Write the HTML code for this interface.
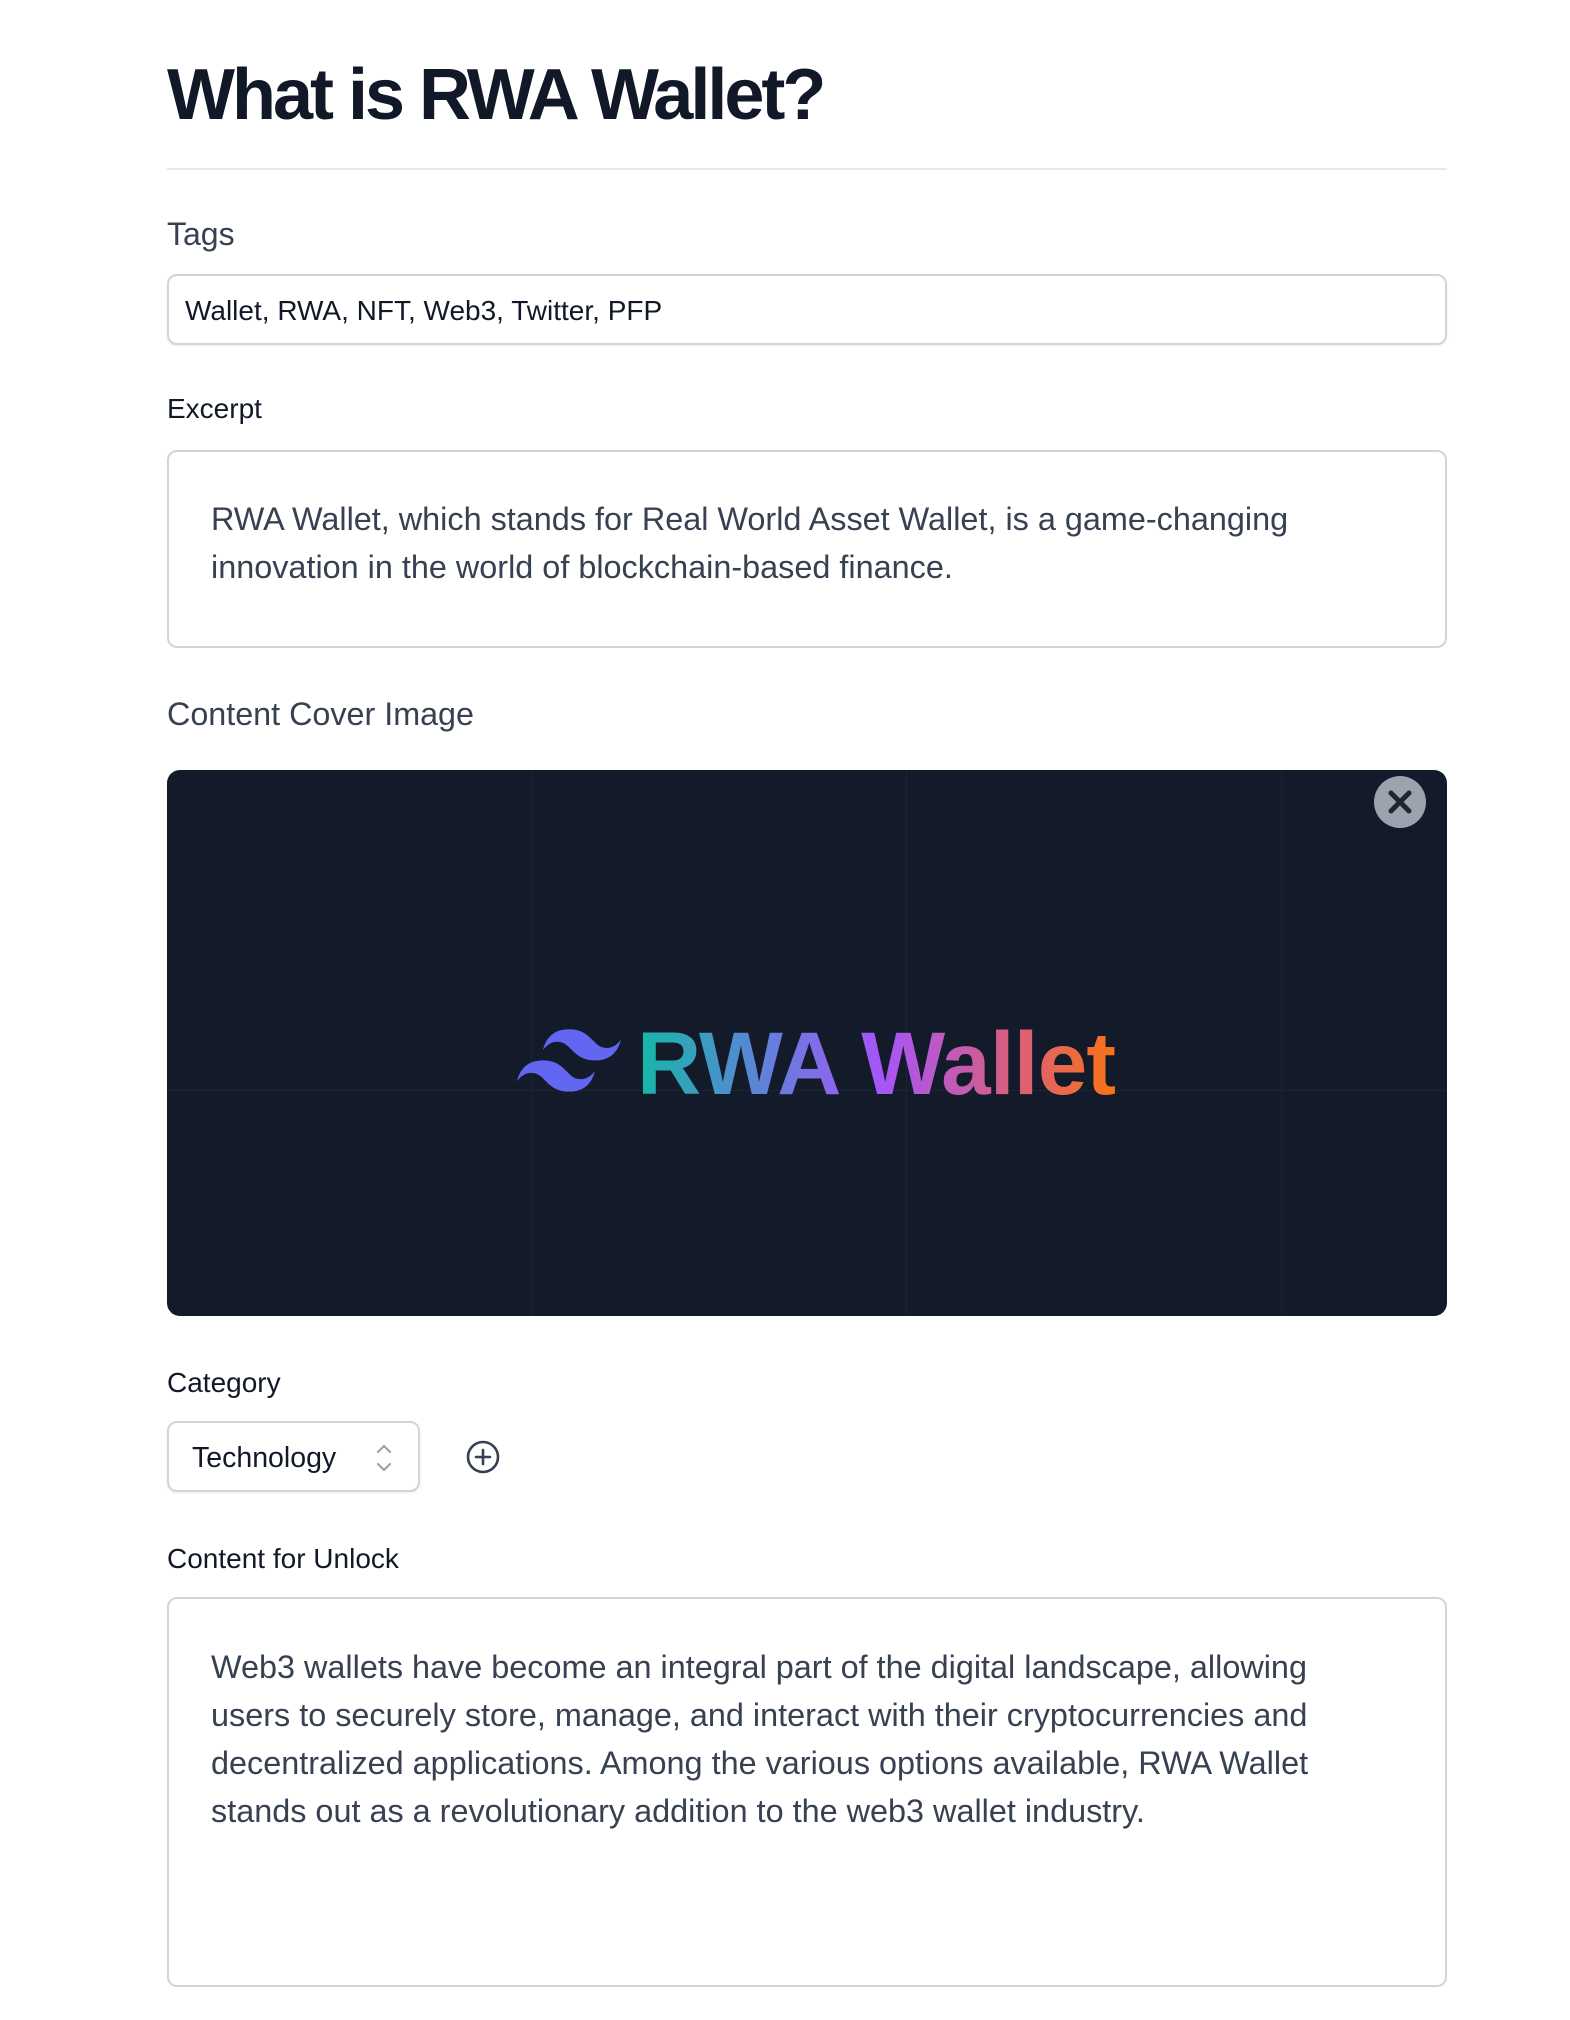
<!DOCTYPE html>
<html><head><meta charset="utf-8"><style>
*{box-sizing:border-box;margin:0;padding:0}
body{width:1570px;height:2020px;background:#fff;font-family:"Liberation Sans",sans-serif;position:relative;overflow:hidden;color:#111827}
.a{position:absolute}
h1{position:absolute;left:167px;top:54px;font-size:72px;font-weight:700;letter-spacing:-3px;color:#111827}
.lbl{position:absolute;left:167px;font-size:28px;color:#111827;line-height:1}
.box{position:absolute;left:167px;width:1280px;border:2px solid #d1d5db;border-radius:10px;background:#fff}
.txt{font-size:32.4px;line-height:48px;color:#374151}
</style></head><body>
<h1>What is RWA Wallet?</h1>
<div class="a" style="left:167px;top:168px;width:1280px;height:2px;background:#e5e7eb"></div>
<div class="lbl" style="top:218px;font-size:32px;color:#374151">Tags</div>
<div class="box" style="top:274px;height:71px;box-shadow:0 1px 2px rgba(0,0,0,.08)"><div style="position:absolute;left:16px;top:19px;font-size:28px;color:#111827">Wallet, RWA, NFT, Web3, Twitter, PFP</div></div>
<div class="lbl" style="top:395px">Excerpt</div>
<div class="box txt" style="top:450px;height:198px;padding:43px 42px 0 42px">RWA Wallet, which stands for Real World Asset Wallet, is a game-changing innovation in the world of blockchain-based finance.</div>
<div class="lbl" style="top:698px;font-size:32.3px;color:#374151">Content Cover Image</div>
<div class="a" style="left:167px;top:770px;width:1280px;height:546px;background:#131a2a;border-radius:13px;overflow:hidden">
 <div class="a" style="left:364px;top:0;width:1px;height:546px;background:#1b2335"></div>
 <div class="a" style="left:739px;top:0;width:1px;height:546px;background:#1b2335"></div>
 <div class="a" style="left:1114px;top:0;width:1px;height:546px;background:#1b2335"></div>
 <div class="a" style="left:0;top:320px;width:1280px;height:1px;background:#1b2335"></div>
 <svg class="a" style="left:350px;top:258px" width="104" height="66" viewBox="0 0 54 33"><path fill="#6366f1" d="M27 0c-7.2 0-11.7 3.6-13.5 10.8 2.7-3.6 5.850-4.95 9.45-4.05 2.054.513 3.522 2.004 5.147 3.653C30.744 13.09 33.808 16.2 40.5 16.2c7.2 0 11.7-3.6 13.5-10.8-2.7 3.6-5.85 4.95-9.45 4.05-2.054-.513-3.522-2.004-5.147-3.653C36.756 3.11 33.692 0 27 0zM13.5 16.2C6.3 16.2 1.8 19.8 0 27c2.7-3.6 5.85-4.95 9.45-4.05 2.054.514 3.522 2.004 5.147 3.653C17.244 29.29 20.308 32.4 27 32.4c7.2 0 11.7-3.6 13.5-10.8-2.7 3.6-5.85 4.95-9.45 4.05-2.054-.513-3.522-2.004-5.147-3.653C23.256 19.31 20.192 16.2 13.5 16.2z"/></svg>
 <div class="a" style="left:470px;top:249px;font-size:89px;font-weight:700;letter-spacing:-0.8px;line-height:1;background:linear-gradient(90deg,#14b8a6,#6b7ae0 30%,#a855f7 52%,#db6077 80%,#f97316);-webkit-background-clip:text;background-clip:text;color:transparent">RWA Wallet</div>
 <div class="a" style="left:1207px;top:6px;width:52px;height:52px;border-radius:50%;background:#9ca3af"><svg width="52" height="52" viewBox="0 0 52 52"><path d="M17 17L35 35M35 17L17 35" stroke="#1f2430" stroke-width="5" stroke-linecap="round"/></svg></div>
</div>
<div class="lbl" style="top:1369px">Category</div>
<div class="box" style="top:1421px;width:253px;height:71px;box-shadow:0 1px 2px rgba(0,0,0,.08)"><div style="position:absolute;left:23px;top:19px;font-size:28.5px;color:#111827">Technology</div>
<svg class="a" style="left:204px;top:18px" width="22" height="34" viewBox="0 0 22 34"><path d="M5 11l6-6 6 6M5 23l6 6 6-6" fill="none" stroke="#9ca3af" stroke-width="2.2" stroke-linecap="round" stroke-linejoin="round"/></svg></div>
<svg class="a" style="left:465px;top:1439px" width="36" height="36" viewBox="0 0 36 36"><circle cx="18" cy="18" r="15" fill="none" stroke="#374151" stroke-width="2.6"/><path d="M18 11v14M11 18h14" stroke="#374151" stroke-width="2.6" stroke-linecap="round"/></svg>
<div class="lbl" style="top:1545px">Content for Unlock</div>
<div class="box txt" style="top:1597px;height:390px;padding:44px 100px 0 42px">Web3 wallets have become an integral part of the digital landscape, allowing users to securely store, manage, and interact with their cryptocurrencies and decentralized applications. Among the various options available, RWA Wallet stands out as a revolutionary addition to the web3 wallet industry.</div>
</body></html>
